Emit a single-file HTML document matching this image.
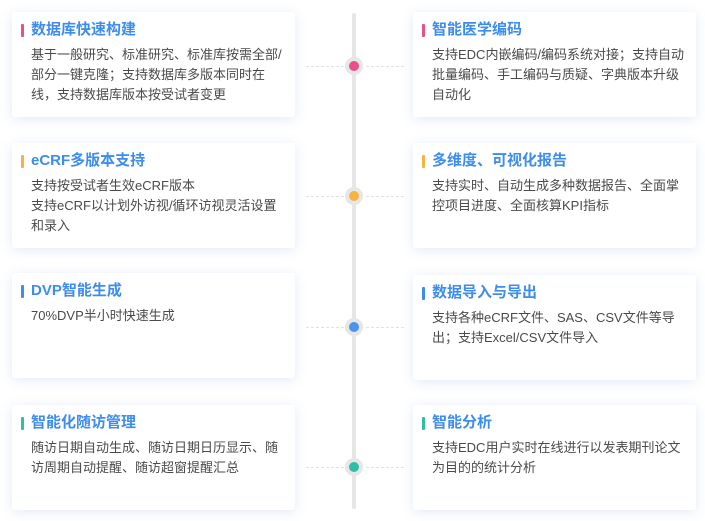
<!DOCTYPE html>
<html><head><meta charset="utf-8">
<style>
html,body{margin:0;padding:0;background:#fff;}
body{width:705px;height:521px;position:relative;overflow:hidden;font-family:"Liberation Sans","Noto Sans CJK SC",sans-serif;}
.card{position:absolute;width:283px;height:105px;background:#fff;border-radius:3px;box-shadow:0 2px 12px rgba(90,140,210,0.18);box-sizing:border-box;}
.card.l{left:12px}.card.r{left:413px}
.t{position:absolute;left:19px;top:8px;font-size:15px;font-weight:bold;color:#3d8cf0;line-height:20px;white-space:nowrap;}
.t i{position:absolute;left:-10px;top:4px;width:3px;height:13px;border-radius:1px;}
.b{position:absolute;left:19px;top:33px;font-size:13px;color:#4a4a4a;line-height:20px;white-space:nowrap;}
.line{position:absolute;left:352px;top:13px;width:4px;height:496px;background:#e6e6e6;border-radius:2px;}
.dot{position:absolute;left:345px;width:18px;height:18px;border-radius:50%;background:#e6e6e6;}
.dot i{position:absolute;left:4px;top:4px;width:10px;height:10px;border-radius:50%;}
.dash{position:absolute;height:0;border-top:1px dashed #e2e2e2;}
</style></head><body>
<div class="line"></div>

<div class="card l" style="top:12px"><div class="t"><i style="background:#e8508a"></i>数据库快速构建</div><div class="b">基于一般研究、标准研究、标准库按需全部/<br>部分一键克隆；支持数据库多版本同时在<br>线，支持数据库版本按受试者变更</div></div>
<div class="card r" style="top:12px"><div class="t"><i style="background:#e8508a"></i>智能医学编码</div><div class="b">支持EDC内嵌编码/编码系统对接；支持自动<br>批量编码、手工编码与质疑、字典版本升级<br>自动化</div></div>

<div class="card l" style="top:143px"><div class="t"><i style="background:#f5b342"></i>eCRF多版本支持</div><div class="b">支持按受试者生效eCRF版本<br>支持eCRF以计划外访视/循环访视灵活设置<br>和录入</div></div>
<div class="card r" style="top:143px"><div class="t"><i style="background:#f5b342"></i>多维度、可视化报告</div><div class="b">支持实时、自动生成多种数据报告、全面掌<br>控项目进度、全面核算KPI指标</div></div>

<div class="card l" style="top:273px"><div class="t"><i style="background:#3d8cf0"></i>DVP智能生成</div><div class="b">70%DVP半小时快速生成</div></div>
<div class="card r" style="top:275px"><div class="t"><i style="background:#3d8cf0"></i>数据导入与导出</div><div class="b">支持各种eCRF文件、SAS、CSV文件等导<br>出；支持Excel/CSV文件导入</div></div>

<div class="card l" style="top:405px"><div class="t"><i style="background:#2ebfa5"></i>智能化随访管理</div><div class="b">随访日期自动生成、随访日期日历显示、随<br>访周期自动提醒、随访超窗提醒汇总</div></div>
<div class="card r" style="top:405px"><div class="t"><i style="background:#2ebfa5"></i>智能分析</div><div class="b">支持EDC用户实时在线进行以发表期刊论文<br>为目的的统计分析</div></div>

<div class="dash" style="left:306px;width:38px;top:66px"></div><div class="dash" style="left:366px;width:38px;top:66px"></div>
<div class="dash" style="left:306px;width:38px;top:196px"></div><div class="dash" style="left:366px;width:38px;top:196px"></div>
<div class="dash" style="left:306px;width:38px;top:327px"></div><div class="dash" style="left:366px;width:38px;top:327px"></div>
<div class="dash" style="left:306px;width:38px;top:467px"></div><div class="dash" style="left:366px;width:38px;top:467px"></div>

<div class="dot" style="top:57px"><i style="background:#e8508a"></i></div>
<div class="dot" style="top:187px"><i style="background:#f5b342"></i></div>
<div class="dot" style="top:318px"><i style="background:#4a94ec"></i></div>
<div class="dot" style="top:458px"><i style="background:#2ebfa5"></i></div>
</body></html>
